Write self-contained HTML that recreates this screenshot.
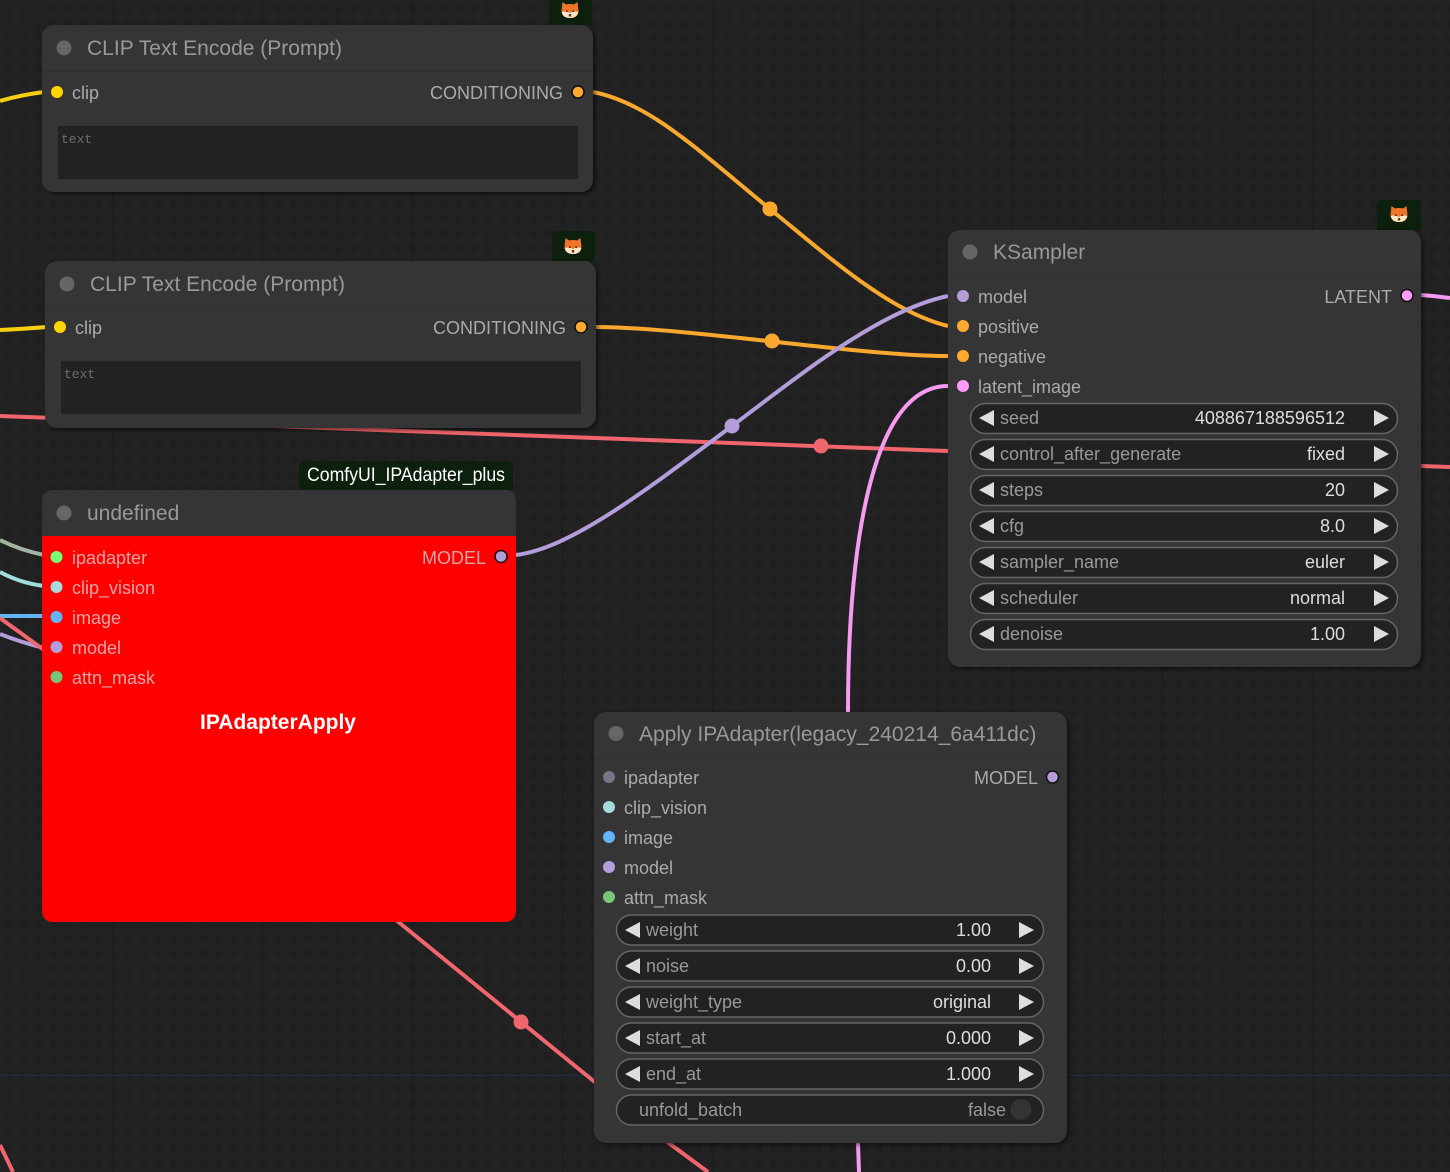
<!DOCTYPE html>
<html><head><meta charset="utf-8"><style>
html,body{margin:0;padding:0;background:#222;width:1450px;height:1172px;overflow:hidden}
svg{display:block;position:absolute;left:0;top:0}
text{font-family:"Liberation Sans",Arial,sans-serif}
.t{font-size:21px;fill:#999}
.s{font-size:18px;fill:#aaa}
.l{font-size:18px;fill:#999}
.v{font-size:18px;fill:#ddd;text-anchor:end}
.r{font-size:18px;fill:#aaa;text-anchor:end}
.w{fill:#222;stroke:#666;stroke-width:1.5}
.a{fill:#ddd}
.rs{font-size:18px;fill:#dfa6a6}
.n{fill:#353535;filter:drop-shadow(2px 2px 2px rgba(0,0,0,.55))}
.m{font-family:"Liberation Mono",monospace;font-size:13px;fill:#6e6e6e}
</style></head><body>
<svg width="1450" height="1172" viewBox="0 0 1450 1172" xmlns="http://www.w3.org/2000/svg">
<defs>
<pattern id="dots" x="0" y="0" width="15" height="15" patternUnits="userSpaceOnUse"><rect x="5" y="5" width="7" height="7" fill="#1f1f1f"/></pattern>
<pattern id="maj" x="-38" y="27" width="150" height="150" patternUnits="userSpaceOnUse"><path d="M0 0V150" stroke="#1c1c1c" stroke-width="2" fill="none"/><path d="M0 0H150" stroke="#1e1e1e" stroke-width="1.500" fill="none"/><path d="M75 0V150" stroke="#1f1f1f" stroke-width="1" fill="none"/></pattern>
<g id="fox"><path d="M-7.500 -8 L-4 -5.500 Q0 -6.500 4 -5.500 L7.500 -8 L8.500 1 Q8 8 0 8 Q-8 8 -8.500 1 Z" fill="#f0752c"/><path d="M-8.300 2 Q-3.500 0.500 0 3 Q3.500 0.500 8.300 2 Q7 8 0 8 Q-7 8 -8.300 2Z" fill="#fbe6c8"/><circle cx="-3.200" cy="1.200" r="0.900" fill="#4a2010"/><circle cx="3.200" cy="1.200" r="0.900" fill="#4a2010"/><path d="M-1.200 4H1.200V6.500H-1.200Z" fill="#6a3018"/></g>
<g id="la"><path d="M0 0 L15 -8 V8 Z" class="a"/></g>
<g id="ra"><path d="M15 0 L0 -8 V8 Z" class="a"/></g>
</defs>
<rect width="1450" height="1172" fill="#222"/>
<rect width="1450" height="1172" fill="url(#dots)"/>
<rect width="1450" height="1172" fill="url(#maj)"/>
<path d="M0 1075.500H1450" stroke="#1f2c3c" stroke-width="1.500"/>

<!-- links -->
<g fill="none" stroke-width="4">
<path d="M0 101 Q20 95 44 92" stroke="#f5cf10"/>
<path d="M0 330 Q22 329 47 327" stroke="#f5cf10"/>
<path d="M593 92C650 103 700 152 770 209C830 258 890 312 948 326" stroke="#f9a82f"/>
<path d="M596 327C684 327 860 356 948 356" stroke="#f9a82f"/>
<path d="M0 416L948 451" stroke="#f0666c"/>
<path d="M516 555C570 548 640 495 732 426C800 375 880 310 948 296" stroke="#b39ddb"/>
<path d="M948 386C868 386 848 560 848 712" stroke="#f79af2"/>
<path d="M858 1143L859 1172" stroke="#f79af2"/>
<path d="M1421 295Q1436 296 1450 298" stroke="#f79af2"/>
<path d="M1421 466L1450 467" stroke="#f0666c"/>
<path d="M0 540Q20 550 44 555" stroke="#a4b4a4"/>
<path d="M0 572Q20 583 44 586" stroke="#a0dcdc"/>
<path d="M0 616H44" stroke="#64b5f6"/>
<path d="M0 634Q20 642 44 648" stroke="#b39ddb"/>
<path d="M0 618L44 650" stroke="#f0666c"/>
<path d="M396 920L596 1083" stroke="#f0666c"/>
<path d="M666 1141L708 1172" stroke="#f0666c"/>
<path d="M0 1145L13 1172" stroke="#f0666c"/>
</g>
<circle cx="770" cy="209" r="7.500" fill="#f9a82f"/>
<circle cx="772" cy="341" r="7.500" fill="#f9a82f"/>
<circle cx="732" cy="426" r="7.500" fill="#b39ddb"/>
<circle cx="821" cy="446" r="7.500" fill="#f0666c"/>
<circle cx="521" cy="1022" r="7.500" fill="#f0666c"/>

<!-- badges -->
<path d="M549 25V0H592V25Z" fill="#0d1f0d"/>
<use href="#fox" x="570" y="10"/>
<path d="M552 261V237Q552 231 558 231H589Q595 231 595 237V261Z" fill="#0d1f0d"/>
<use href="#fox" x="573" y="246"/>
<path d="M1377 230V206Q1377 200 1383 200H1415Q1421 200 1421 206V230Z" fill="#0d1f0d"/>
<use href="#fox" x="1399" y="214"/>
<path d="M299 490V467Q299 461 305 461H507Q513 461 513 467V490Z" fill="#0d1f0d"/>
<text x="307" y="481" font-size="19px" fill="#fff" textLength="198" lengthAdjust="spacingAndGlyphs">ComfyUI_IPAdapter_plus</text>

<!-- Node 1 -->
<g>
<rect class="n" x="42" y="25" width="551" height="167" rx="12"/>
<path d="M42 71.500H593" stroke="#303030" stroke-width="1.500"/>
<circle cx="64" cy="48" r="7.500" fill="#666"/>
<text class="t" x="87" y="55" textLength="255" lengthAdjust="spacingAndGlyphs">CLIP Text Encode (Prompt)</text>
<circle cx="57" cy="92" r="6" fill="#ffd500"/>
<text class="s" x="72" y="99">clip</text>
<text class="r" x="563" y="99">CONDITIONING</text>
<circle cx="578" cy="92" r="6" fill="#ffa931" stroke="#111" stroke-width="1.500"/>
<rect x="58" y="126" width="520" height="53" fill="#222"/>
<text class="m" x="61" y="143">text</text>
</g>
<!-- Node 2 -->
<g>
<rect class="n" x="45" y="261" width="551" height="167" rx="12"/>
<path d="M45 306.500H596" stroke="#303030" stroke-width="1.500"/>
<circle cx="67" cy="284" r="7.500" fill="#666"/>
<text class="t" x="90" y="291" textLength="255" lengthAdjust="spacingAndGlyphs">CLIP Text Encode (Prompt)</text>
<circle cx="60" cy="327" r="6" fill="#ffd500"/>
<text class="s" x="75" y="334">clip</text>
<text class="r" x="566" y="334">CONDITIONING</text>
<circle cx="581" cy="327" r="6" fill="#ffa931" stroke="#111" stroke-width="1.500"/>
<rect x="61" y="361" width="520" height="53" fill="#222"/>
<text class="m" x="64" y="378">text</text>
</g>
<!-- Red node -->
<g>
<path d="M42 536V502Q42 490 54 490H504Q516 490 516 502V536Z" fill="#353535"/>
<path d="M42 536H516V910Q516 922 504 922H54Q42 922 42 910Z" fill="#f00"/>
<circle cx="64" cy="513" r="7.500" fill="#666"/>
<text class="t" x="87" y="520">undefined</text>
<circle cx="56.500" cy="557" r="6" fill="#7f7"/>
<circle cx="56.500" cy="587" r="6" fill="#a8dadc"/>
<circle cx="56.500" cy="617" r="6" fill="#64b5f6"/>
<circle cx="56.500" cy="647" r="6" fill="#b39ddb"/>
<circle cx="56.500" cy="677" r="6" fill="#79c57a"/>
<text class="rs" x="72" y="564">ipadapter</text>
<text class="rs" x="72" y="594">clip_vision</text>
<text class="rs" x="72" y="624">image</text>
<text class="rs" x="72" y="654">model</text>
<text class="rs" x="72" y="684">attn_mask</text>
<text class="rs" x="486" y="564" text-anchor="end">MODEL</text>
<circle cx="501" cy="556.500" r="6" fill="#b39ddb" stroke="#111" stroke-width="1.500"/>
<text x="278" y="729" font-size="21px" font-weight="bold" fill="#fff" text-anchor="middle" textLength="156" lengthAdjust="spacingAndGlyphs">IPAdapterApply</text>
</g>
<!-- KSampler -->
<g>
<rect class="n" x="948" y="230" width="473" height="437" rx="12"/>
<path d="M948 275.500H1421" stroke="#303030" stroke-width="1.500"/>
<circle cx="970" cy="252" r="7.500" fill="#666"/>
<text class="t" x="993" y="259">KSampler</text>
<circle cx="963" cy="296" r="6" fill="#b39ddb"/>
<circle cx="963" cy="326" r="6" fill="#ffa931"/>
<circle cx="963" cy="356" r="6" fill="#ffa931"/>
<circle cx="963" cy="386" r="6" fill="#ff9cf9"/>
<text class="s" x="978" y="303">model</text>
<text class="s" x="978" y="333">positive</text>
<text class="s" x="978" y="363">negative</text>
<text class="s" x="978" y="393">latent_image</text>
<text class="r" x="1392" y="303">LATENT</text>
<circle cx="1407" cy="295.500" r="6" fill="#ff9cf9" stroke="#111" stroke-width="1.500"/>

<rect class="w" x="970.500" y="403.500" width="427" height="30" rx="15"/>
<rect class="w" x="970.500" y="439.500" width="427" height="30" rx="15"/>
<rect class="w" x="970.500" y="475.500" width="427" height="30" rx="15"/>
<rect class="w" x="970.500" y="511.500" width="427" height="30" rx="15"/>
<rect class="w" x="970.500" y="547.500" width="427" height="30" rx="15"/>
<rect class="w" x="970.500" y="583.500" width="427" height="30" rx="15"/>
<rect class="w" x="970.500" y="619.500" width="427" height="30" rx="15"/>
<use href="#la" x="979" y="418"/><use href="#la" x="979" y="454"/><use href="#la" x="979" y="490"/><use href="#la" x="979" y="526"/><use href="#la" x="979" y="562"/><use href="#la" x="979" y="598"/><use href="#la" x="979" y="634"/>
<use href="#ra" x="1374" y="418"/><use href="#ra" x="1374" y="454"/><use href="#ra" x="1374" y="490"/><use href="#ra" x="1374" y="526"/><use href="#ra" x="1374" y="562"/><use href="#ra" x="1374" y="598"/><use href="#ra" x="1374" y="634"/>
<text class="l" x="1000" y="424">seed</text><text class="v" x="1345" y="424">408867188596512</text>
<text class="l" x="1000" y="460">control_after_generate</text><text class="v" x="1345" y="460">fixed</text>
<text class="l" x="1000" y="496">steps</text><text class="v" x="1345" y="496">20</text>
<text class="l" x="1000" y="532">cfg</text><text class="v" x="1345" y="532">8.0</text>
<text class="l" x="1000" y="568">sampler_name</text><text class="v" x="1345" y="568">euler</text>
<text class="l" x="1000" y="604">scheduler</text><text class="v" x="1345" y="604">normal</text>
<text class="l" x="1000" y="640">denoise</text><text class="v" x="1345" y="640">1.00</text>
</g>
<!-- Apply -->
<g>
<rect class="n" x="594" y="712" width="473" height="431" rx="12"/>
<path d="M594 757.500H1067" stroke="#303030" stroke-width="1.500"/>
<circle cx="616" cy="733.500" r="7.500" fill="#666"/>
<text class="t" x="639" y="741">Apply IPAdapter(legacy_240214_6a411dc)</text>
<circle cx="609" cy="777" r="6" fill="#777787"/>
<circle cx="609" cy="807" r="6" fill="#a8dadc"/>
<circle cx="609" cy="837" r="6" fill="#64b5f6"/>
<circle cx="609" cy="867" r="6" fill="#b39ddb"/>
<circle cx="609" cy="897" r="6" fill="#79c57a"/>
<text class="s" x="624" y="784">ipadapter</text>
<text class="s" x="624" y="814">clip_vision</text>
<text class="s" x="624" y="844">image</text>
<text class="s" x="624" y="874">model</text>
<text class="s" x="624" y="904">attn_mask</text>
<text class="r" x="1038" y="784">MODEL</text>
<circle cx="1052.500" cy="777" r="6" fill="#b39ddb" stroke="#111" stroke-width="1.500"/>

<rect class="w" x="616.500" y="915" width="427" height="30" rx="15"/>
<rect class="w" x="616.500" y="951" width="427" height="30" rx="15"/>
<rect class="w" x="616.500" y="987" width="427" height="30" rx="15"/>
<rect class="w" x="616.500" y="1023" width="427" height="30" rx="15"/>
<rect class="w" x="616.500" y="1059" width="427" height="30" rx="15"/>
<rect class="w" x="616.500" y="1095" width="427" height="30" rx="15"/>
<use href="#la" x="625" y="930"/><use href="#la" x="625" y="966"/><use href="#la" x="625" y="1002"/><use href="#la" x="625" y="1038"/><use href="#la" x="625" y="1074"/>
<use href="#ra" x="1019" y="930"/><use href="#ra" x="1019" y="966"/><use href="#ra" x="1019" y="1002"/><use href="#ra" x="1019" y="1038"/><use href="#ra" x="1019" y="1074"/>
<text class="l" x="646" y="936">weight</text><text class="v" x="991" y="936">1.00</text>
<text class="l" x="646" y="972">noise</text><text class="v" x="991" y="972">0.00</text>
<text class="l" x="646" y="1008">weight_type</text><text class="v" x="991" y="1008">original</text>
<text class="l" x="646" y="1044">start_at</text><text class="v" x="991" y="1044">0.000</text>
<text class="l" x="646" y="1080">end_at</text><text class="v" x="991" y="1080">1.000</text>
<text class="l" x="639" y="1116">unfold_batch</text>
<text x="1006" y="1116" font-size="18px" fill="#999" text-anchor="end">false</text>
<circle cx="1021" cy="1109.500" r="10.500" fill="#333"/>
</g>
</svg>
</body></html>
